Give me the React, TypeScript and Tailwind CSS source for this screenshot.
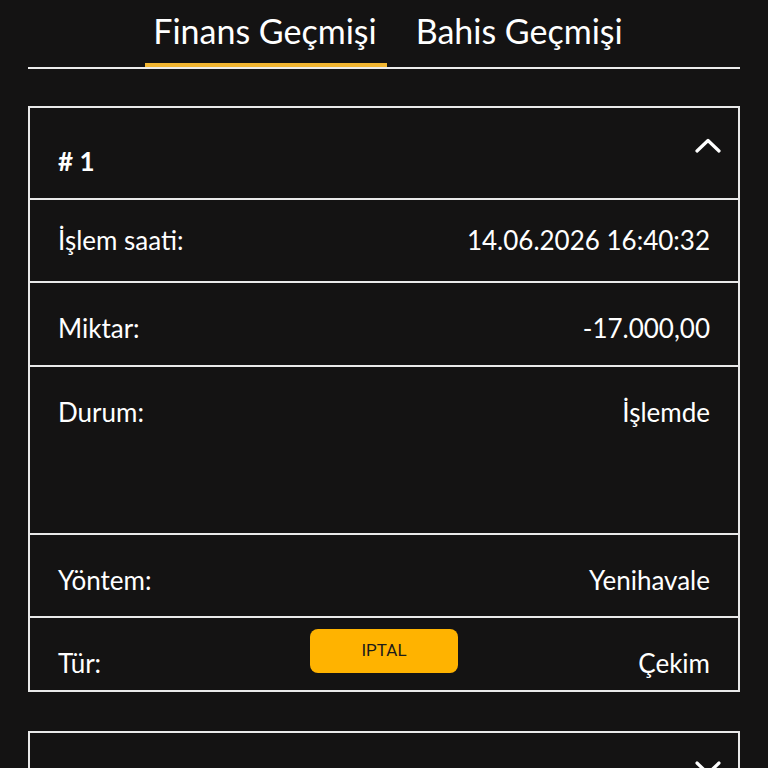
import React from "react";

function ChevronUp() {
  return (
    <svg width="26" height="15" viewBox="0 0 26 15" className="block">
      <polyline points="2,13 13,2.5 24,13" fill="none" stroke="#ffffff" strokeWidth="3.2" strokeLinecap="round" strokeLinejoin="round" />
    </svg>
  );
}

function ChevronDown() {
  return (
    <svg width="26" height="15" viewBox="0 0 26 15" className="block">
      <polyline points="2,2 13,12.5 24,2" fill="none" stroke="#ffffff" strokeWidth="3.2" strokeLinecap="round" strokeLinejoin="round" />
    </svg>
  );
}

function Row({ label, value, h, pt }: { label: string; value: string; h: string; pt: string }) {
  return (
    <div className={`flex justify-between border-t-2 border-[#e9e9e9] px-[28px] ${h} ${pt}`}>
      <span className="text-[26px] leading-8">{label}</span>
      <span className="text-[26px] leading-8 text-right">{value}</span>
    </div>
  );
}

export default function App() {
  return (
    <div className="min-h-screen bg-[#141313] text-white font-['Lato',sans-serif]">
      <div className="px-[28px]">
        <div className="flex justify-center gap-[20px] pl-[10px] border-b-2 border-[#ececec]">
          <div className="pl-[8px] pr-[10px] pt-[11px] pb-[12px] border-b-4 border-[#f2b631] text-[34px] leading-10">
            Finans Geçmişi
          </div>
          <div className="pl-[9px] pr-[10px] pt-[11px] pb-[12px] border-b-4 border-transparent text-[34px] leading-10">
            Bahis Geçmişi
          </div>
        </div>

        <div className="mt-[37px] border-2 border-[#e9e9e9]">
          <div className="flex justify-between h-[90px] pl-[28px] pr-[17px]">
            <span className="pt-[39px] text-[26px] leading-7 font-bold">#&nbsp;1</span>
            <span className="mt-[30px]">
              <ChevronUp />
            </span>
          </div>
          <Row label="İşlem saati:" value="14.06.2026 16:40:32" h="h-[83px]" pt="pt-[24px]" />
          <Row label="Miktar:" value="-17.000,00" h="h-[84px]" pt="pt-[29px]" />
          <Row label="Durum:" value="İşlemde" h="h-[168px]" pt="pt-[29px]" />
          <Row label="Yöntem:" value="Yenihavale" h="h-[83px]" pt="pt-[29px]" />
          <div className="grid grid-cols-[1fr_auto_1fr] items-start border-t-2 border-[#e9e9e9] px-[28px] h-[74px]">
            <span className="pt-[29px] text-[26px] leading-8">Tür:</span>
            <button className="mt-[11px] w-[148px] h-[44px] rounded-[8px] bg-[#ffb300] text-[#1b1b1b] text-[17px] font-['Roboto',sans-serif] font-normal">
              IPTAL
            </button>
            <span className="pt-[29px] text-[26px] leading-8 text-right">Çekim</span>
          </div>
        </div>

        <div className="mt-[39px] border-2 border-[#e9e9e9]">
          <div className="flex justify-between h-[90px] pl-[28px] pr-[17px]">
            <span className="pt-[39px] text-[26px] leading-7 font-bold">#&nbsp;2</span>
            <span className="mt-[28px]">
              <ChevronDown />
            </span>
          </div>
        </div>
      </div>
    </div>
  );
}
